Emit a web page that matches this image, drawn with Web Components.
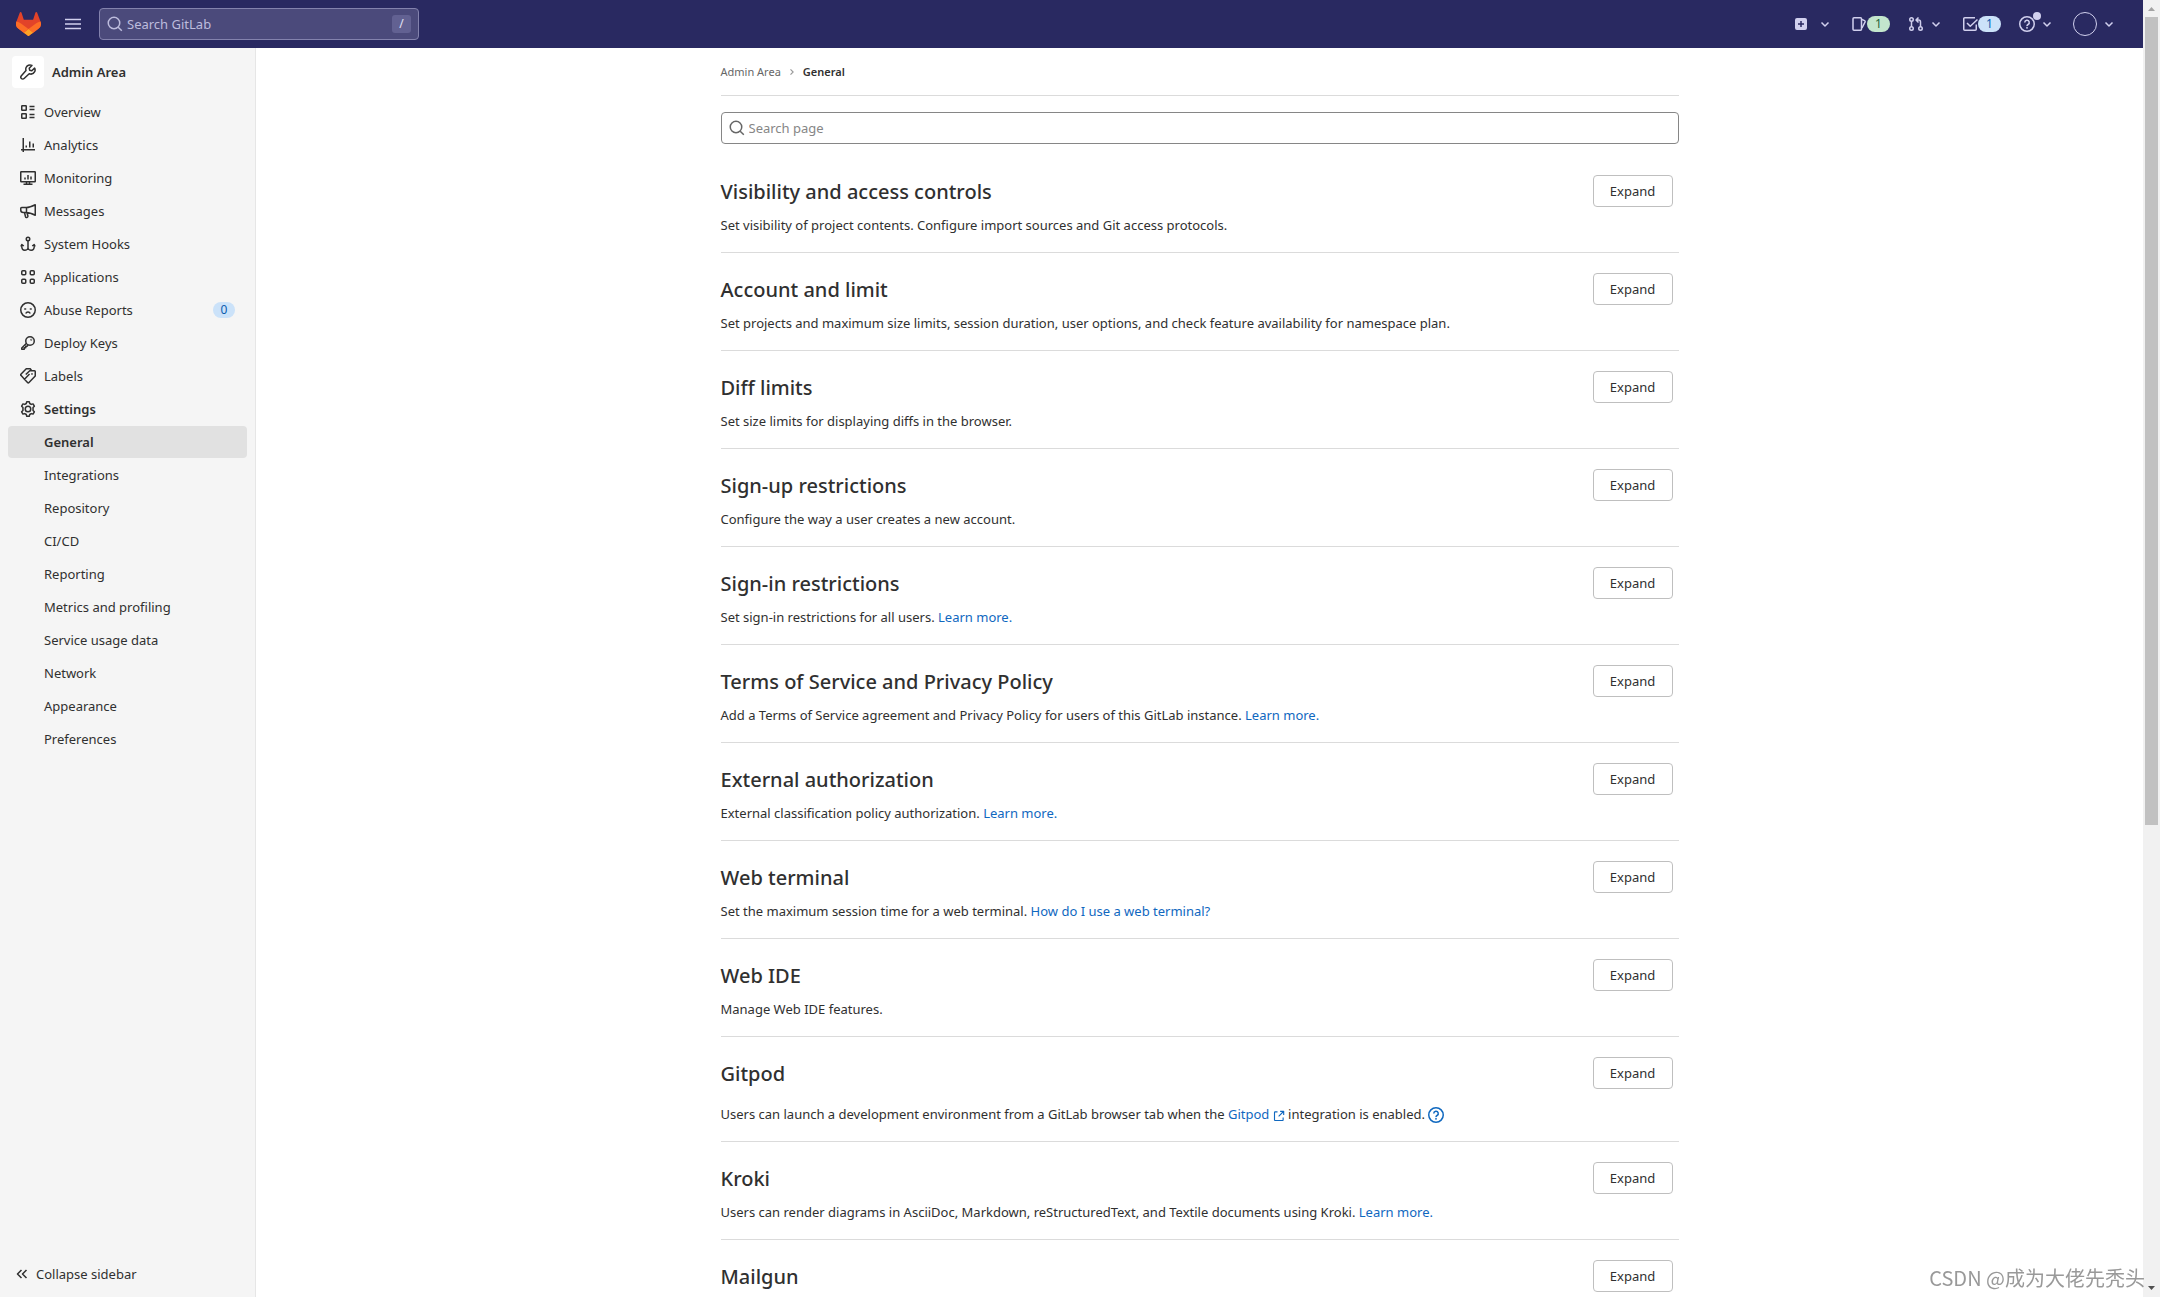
<!DOCTYPE html>
<html lang="en">
<head>
<meta charset="utf-8">
<title>General · Admin Area · GitLab</title>
<style>
  html, body { height: 100%; margin: 0; }
  body {
    overflow: hidden;
    font: 13px/20px 'Noto Sans', 'Noto Sans CJK SC', sans-serif;
    color: #303030;
    background: #fff;
  }
  a { color: #1068bf; text-decoration: none; }
  a.help gl-icon { vertical-align: text-bottom; }
</style>
</head>
<body>
<admin-app>
  <nav-bar slot="nav"></nav-bar>
  <side-bar slot="side">
    <side-item icon="overview" label="Overview"></side-item>
    <side-item icon="chart" label="Analytics"></side-item>
    <side-item icon="monitor" label="Monitoring"></side-item>
    <side-item icon="messages" label="Messages"></side-item>
    <side-item icon="hook" label="System Hooks"></side-item>
    <side-item icon="applications" label="Applications"></side-item>
    <side-item icon="abuse" label="Abuse Reports" badge="0"></side-item>
    <side-item icon="key" label="Deploy Keys"></side-item>
    <side-item icon="labels" label="Labels"></side-item>
    <side-item icon="settings" label="Settings" bold></side-item>
    <side-item label="General" bold active></side-item>
    <side-item label="Integrations"></side-item>
    <side-item label="Repository"></side-item>
    <side-item label="CI/CD"></side-item>
    <side-item label="Reporting"></side-item>
    <side-item label="Metrics and profiling"></side-item>
    <side-item label="Service usage data"></side-item>
    <side-item label="Network"></side-item>
    <side-item label="Appearance"></side-item>
    <side-item label="Preferences"></side-item>
  </side-bar>
  <settings-page>
    <settings-section heading="Visibility and access controls">Set visibility of project contents. Configure import sources and Git access protocols.</settings-section>
    <settings-section heading="Account and limit">Set projects and maximum size limits, session duration, user options, and check feature availability for namespace plan.</settings-section>
    <settings-section heading="Diff limits">Set size limits for displaying diffs in the browser.</settings-section>
    <settings-section heading="Sign-up restrictions">Configure the way a user creates a new account.</settings-section>
    <settings-section heading="Sign-in restrictions">Set sign-in restrictions for all users. <a href="#">Learn more.</a></settings-section>
    <settings-section heading="Terms of Service and Privacy Policy">Add a Terms of Service agreement and Privacy Policy for users of this GitLab instance. <a href="#">Learn more.</a></settings-section>
    <settings-section heading="External authorization">External classification policy authorization. <a href="#">Learn more.</a></settings-section>
    <settings-section heading="Web terminal">Set the maximum session time for a web terminal. <a href="#">How do I use a web terminal?</a></settings-section>
    <settings-section heading="Web IDE">Manage Web IDE features.</settings-section>
    <settings-section heading="Gitpod" roomy>Users can launch a development environment from a GitLab browser tab when the <a href="#">Gitpod <gl-icon name="external" size="12"></gl-icon></a> integration is enabled. <a class="help" href="#" aria-label="Help"><gl-icon name="question"></gl-icon></a></settings-section>
    <settings-section heading="Kroki">Users can render diagrams in AsciiDoc, Markdown, reStructuredText, and Textile documents using Kroki. <a href="#">Learn more.</a></settings-section>
    <settings-section heading="Mailgun"></settings-section>
  </settings-page>
  <scroll-track slot="scroll"></scroll-track>
</admin-app>
<water-mark>CSDN @成为大佬先秃头</water-mark>

<script>
const ICONS = {
  overview: '<rect x="1.75" y="1.75" width="4.5" height="4.5" rx=".5"/><rect x="1.75" y="9.75" width="4.5" height="4.5" rx=".5"/><path d="M9.5 2.5h5M9.5 5.5h5M9.5 10.5h5M9.5 13.5h5"/>',
  chart: '<path d="M3.25 1v14M1 12.75h14M6.25 10.5v-2M9.75 10.5v-6M13.25 10.5v-4"/>',
  monitor: '<rect x=".75" y="1.75" width="14.5" height="10" rx=".5"/><path d="M6.5 12v2M9.5 12v2M3.5 14.25h9M5 9.5v-2M8 9.5V5M11 9.5v-3"/>',
  messages: '<path d="M.75 5.5a1 1 0 0 1 1-1H6.5c2.5 0 5.500-1.100 8.750-2.750v10.5C12 10.600 9 9.500 6.500 9.500H3.250a2.500 2.500 0 0 1-2.500-2.500zM6.500 4.500v5M4.500 9.500l1 4.250a1 1 0 0 0 1.200.7l.6-.2a1 1 0 0 0 .6-1.200L7 9.750"/>',
  hook: '<circle cx="8" cy="3" r="1.75"/><path d="M8 5v9M1.75 8.75v1.5C1.75 12.5 3 14.25 4.75 14.25S8 13 8 12c0 1 1.5 2.250 3.250 2.250s3-1.750 3-4v-1.500M.9 10.500l.9-2 2 1.500M15.100 10.500l-.9-2-2 1.500"/>',
  applications: '<rect x="1.75" y="1.75" width="4" height="4" rx="1"/><rect x="10.25" y="1.75" width="4" height="4" rx="1"/><rect x="1.75" y="10.25" width="4" height="4" rx="1"/><rect x="10.25" y="10.25" width="4" height="4" rx="1"/>',
  abuse: '<circle cx="8" cy="8" r="7.25"/><path d="M5.75 11.5c.4-.9 1.2-1.4 2.250-1.400s1.850.5 2.250 1.400"/><circle cx="5.250" cy="7" r=".35"/><circle cx="10.750" cy="7" r=".35"/>',
  key: '<circle cx="10" cy="6" r="4.25"/><path d="M6.25 8.5L1.75 13v1.25h2.5v-1.5h1.5v-1.5H7l1.25-1.350"/><circle cx="11.250" cy="4.750" r=".25"/>',
  labels: '<path d="M5.75 6.5l4-3.750h4.750a.75.75 0 0 1 .75.75V8l-6.500 6.750a.7.7 0 0 1-1 0L3.750 10.500M11.500 2.500L10.250.8h-4L.9 6.250a.8.8 0 0 0 0 1.100l3.600 3.800L9.500 6"/><circle cx="12" cy="6" r=".25"/>',
  settings: '<path d="M6.75.75h2.500l.5 1.750 1.500.9 1.800-.5 1.300 2.300-1.300 1.400v2.800l1.300 1.400-1.300 2.300-1.800-.5-1.500.9-.5 1.750h-2.500l-.5-1.750-1.500-.9-1.800.5-1.300-2.300 1.300-1.400V6.600l-1.300-1.400 1.300-2.300 1.800.5 1.500-.9z"/><circle cx="8" cy="8" r="2.75"/>',
  wrench: '<path d="M14.600 4.100l-2.800 2.700-2.100-.5-.5-2.100 2.700-2.800C9.500.3 7 1.400 6.100 3.500c-.5 1.100-.4 2.100-.1 3.100l-4.600 5.200c-.8.9-.8 1.900 0 2.700s1.900.8 2.700 0l5.100-4.700c2.200.7 4.500-.2 5.500-2.200.6-1.200.5-2.400-.1-3.500z"/>',
  search: '<circle cx="7" cy="7" r="5.75"/><path d="M11.200 11.200l3.600 3.600"/>',
  hamburger: '<path d="M0 3.500h16M0 8h16M0 12.500h16"/>',
  plus: '<path fill="currentColor" stroke="none" fill-rule="evenodd" d="M4 2h8a2 2 0 0 1 2 2v8a2 2 0 0 1-2 2H4a2 2 0 0 1-2-2V4a2 2 0 0 1 2-2zm3.250 3v2.250H5v1.500h2.250V11h1.500V8.750H11v-1.500H8.750V5z"/>',
  chevron: '<path d="M4.500 6.500L8 10l3.500-3.500"/>',
  right: '<path d="M6 4.500L9.500 8 6 11.500"/>',
  collapse: '<path d="M7.500 4L3.500 8l4 4M12.500 4l-4 4 4 4"/>',
  issues: '<rect x="2" y="1.75" width="8.5" height="12.5" rx="1"/><path d="M11 3.500l2.600 1.100a1 1 0 0 1 .5 1.300L11 12"/>',
  merge: '<circle cx="3.500" cy="3.500" r="1.75"/><circle cx="3.500" cy="12.500" r="1.75"/><circle cx="12.500" cy="12.500" r="1.75"/><path d="M3.500 5.250v5.500M12.500 10.750V6a2 2 0 0 0-2-2h-2M10.500 1.500L8 4l2.500 2.500"/>',
  todo: '<path d="M14.250 8.500v4.750a1 1 0 0 1-1 1H2.750a1 1 0 0 1-1-1V2.750a1 1 0 0 1 1-1H13M5 7l3.250 3.250L15.500 3.500"/>',
  question: '<circle cx="8" cy="8" r="7.25"/><path d="M5.750 6.500a2.250 2.250 0 1 1 3.300 2C8.300 8.900 8 9.200 8 10"/><circle cx="8" cy="11.800" r=".3"/>',
  external: '<path d="M6 2.500H2.750a.75.75 0 0 0-.75.75v10c0 .4.3.75.75.75h10a.75.75 0 0 0 .75-.75V10M9.500 1.750h4.750V6.500M14 2L7.500 8.500"/>'
};

class GlIcon extends HTMLElement {
  connectedCallback() {
    const size = this.getAttribute('size') || '16';
    this.attachShadow({ mode: 'open' }).innerHTML = `
      <style>
        :host { display: inline-block; flex: none; vertical-align: middle; }
        svg { display: block; fill: none; stroke: currentColor; stroke-width: 1.5; stroke-linejoin: round; }
      </style>
      <svg width="${size}" height="${size}" viewBox="0 0 16 16" aria-hidden="true">${ICONS[this.getAttribute('name')]}</svg>
    `;
  }
}

class AdminApp extends HTMLElement {
  constructor() {
    super();
    this.attachShadow({ mode: 'open' }).innerHTML = `
      <style>
        :host { display: flex; height: 100vh; overflow: hidden; }
        .app { flex: 1; min-width: 0; display: flex; flex-direction: column; }
        .body { flex: 1; min-height: 0; display: flex; }
        main { flex: 1; min-width: 0; overflow: hidden; }
      </style>
      <div class="app">
        <slot name="nav"></slot>
        <div class="body">
          <slot name="side"></slot>
          <main><slot></slot></main>
        </div>
      </div>
      <slot name="scroll"></slot>
    `;
  }
}

class NavBar extends HTMLElement {
  constructor() {
    super();
    this.attachShadow({ mode: 'open' }).innerHTML = `
      <style>
        :host {
          display: flex;
          align-items: center;
          justify-content: space-between;
          flex: none;
          height: 48px;
          padding: 0 26px 0 16px;
          box-sizing: border-box;
          background: #292961;
          color: #d1d0ee;
        }
        .left, .right, .search, button { display: flex; align-items: center; }
        .right { gap: 18px; }
        button { padding: 0; border: 0; background: none; color: inherit; font: inherit; }
        .right button { gap: 4px; }
        .right .new { gap: 8px; }
        .right .count { gap: 0; }
        .logo { display: block; height: 24px; margin-right: 24px; }
        .search {
          box-sizing: border-box;
          width: 320px;
          height: 32px;
          margin-left: 18px;
          padding: 0 7px;
          gap: 4px;
          border: 1px solid #8382ad;
          border-radius: 4px;
          background: #4b4a7b;
          color: #bdbcdd;
        }
        input { flex: 1; min-width: 0; padding: 0; border: 0; outline: 0; background: none; color: inherit; font: inherit; }
        input::placeholder { color: #bdbcdd; opacity: 1; }
        kbd {
          width: 19px;
          border-radius: 3px;
          background: #626192;
          color: #e4e3f5;
          font: 12px/18px 'Noto Sans', sans-serif;
          text-align: center;
        }
        .badge {
          width: 23px;
          border-radius: 8px;
          font-size: 12px;
          line-height: 16px;
          text-align: center;
        }
        .green { background: #c3e6cd; color: #24663b; }
        .blue { background: #cbe2f9; color: #0b5cad; }
        .help { position: relative; }
        .dot { position: absolute; left: 14px; top: -4px; width: 8px; height: 8px; border-radius: 50%; background: #d1d0ee; }
        .avatar { box-sizing: border-box; width: 24px; height: 24px; border: 1px solid #d1d0ee; border-radius: 50%; }
      </style>
      <div class="left">
        <a class="logo" href="#" aria-label="Homepage">
          <svg width="25" height="24" viewBox="0 0 25 24">
            <path d="m24.507 9.500-.034-.09L21.082.562a.896.896 0 0 0-1.694.091l-2.290 7.010H7.825L5.535.653a.898.898 0 0 0-1.694-.09L.451 9.411.416 9.500a6.297 6.297 0 0 0 2.090 7.278l.012.010.030.022 5.160 3.867 2.560 1.935 1.554 1.176a1.051 1.051 0 0 0 1.268 0l1.555-1.176 2.560-1.935 5.197-3.890.014-.010A6.297 6.297 0 0 0 24.507 9.500Z" fill="#E24329"/>
            <path d="m24.507 9.500-.034-.09a11.440 11.440 0 0 0-4.560 2.051l-7.447 5.632 4.742 3.584 5.197-3.890.014-.010A6.297 6.297 0 0 0 24.507 9.500Z" fill="#FC6D26"/>
            <path d="m7.707 20.677 2.560 1.935 1.555 1.176a1.051 1.051 0 0 0 1.268 0l1.555-1.176 2.560-1.935-4.743-3.584-4.755 3.584Z" fill="#FCA326"/>
            <path d="M5.010 11.461a11.430 11.430 0 0 0-4.560-2.050L.416 9.500a6.297 6.297 0 0 0 2.090 7.278l.012.010.030.022 5.160 3.867 4.745-3.584-7.444-5.632Z" fill="#FC6D26"/>
          </svg>
        </a>
        <button aria-label="Menu"><gl-icon name="hamburger"></gl-icon></button>
        <div class="search">
          <gl-icon name="search"></gl-icon>
          <input type="text" placeholder="Search GitLab" aria-label="Search GitLab">
          <kbd>/</kbd>
        </div>
      </div>
      <div class="right">
        <button class="new" aria-label="Create new"><gl-icon name="plus"></gl-icon><gl-icon name="chevron"></gl-icon></button>
        <button class="count" aria-label="Issues"><gl-icon name="issues"></gl-icon><span class="badge green">1</span></button>
        <button aria-label="Merge requests"><gl-icon name="merge"></gl-icon><gl-icon name="chevron"></gl-icon></button>
        <button class="count" aria-label="To-Do List"><gl-icon name="todo"></gl-icon><span class="badge blue">1</span></button>
        <button class="help" aria-label="Help"><gl-icon name="question"></gl-icon><span class="dot"></span><gl-icon name="chevron"></gl-icon></button>
        <button aria-label="Profile"><span class="avatar"></span><gl-icon name="chevron"></gl-icon></button>
      </div>
    `;
  }
}

class SideBar extends HTMLElement {
  constructor() {
    super();
    this.attachShadow({ mode: 'open' }).innerHTML = `
      <style>
        :host {
          display: flex;
          flex-direction: column;
          flex: none;
          box-sizing: border-box;
          width: 256px;
          padding: 8px 8px 7px;
          border-right: 1px solid #e6e6e6;
          background: #f5f5f5;
        }
        .context {
          display: flex;
          align-items: center;
          gap: 8px;
          margin: 0 4px 8px;
          color: #303030;
          font-weight: 600;
          text-decoration: none;
        }
        .tile { display: grid; place-items: center; width: 32px; height: 32px; border-radius: 4px; background: #fff; }
        nav { flex: 1; display: flex; flex-direction: column; gap: 1px; }
        button {
          display: flex;
          align-items: center;
          gap: 6px;
          height: 32px;
          padding: 0 6px;
          border: 0;
          background: none;
          color: #303030;
          font: inherit;
        }
      </style>
      <a class="context" href="#"><span class="tile"><gl-icon name="wrench"></gl-icon></span>Admin Area</a>
      <nav><slot></slot></nav>
      <button><gl-icon name="collapse"></gl-icon>Collapse sidebar</button>
    `;
  }
}

class SideItem extends HTMLElement {
  connectedCallback() {
    const icon = this.getAttribute('icon');
    const badge = this.getAttribute('badge');
    this.attachShadow({ mode: 'open' }).innerHTML = `
      <style>
        :host { display: block; }
        a {
          display: flex;
          align-items: center;
          gap: 8px;
          height: 32px;
          padding: 0 12px;
          border-radius: 4px;
          color: #303030;
          text-decoration: none;
        }
        :host([bold]) a { font-weight: 600; }
        :host([active]) a { background: #e1e1e1; }
        .icon { width: 16px; height: 16px; display: flex; }
        .label { flex: 1; }
        .badge {
          width: 22px;
          border-radius: 8px;
          background: #cbe2f9;
          color: #0b5cad;
          font-size: 12px;
          line-height: 16px;
          text-align: center;
        }
      </style>
      <a href="#">
        <span class="icon">${icon ? `<gl-icon name="${icon}"></gl-icon>` : ''}</span>
        <span class="label">${this.getAttribute('label')}</span>
        ${badge ? `<span class="badge">${badge}</span>` : ''}
      </a>
    `;
  }
}

class SettingsPage extends HTMLElement {
  constructor() {
    super();
    this.attachShadow({ mode: 'open' }).innerHTML = `
      <style>
        :host { display: block; max-width: 958px; margin: 0 auto; padding: 0 16px; }
        nav {
          display: flex;
          align-items: center;
          gap: 5px;
          height: 47px;
          border-bottom: 1px solid #dbdbdb;
          font-size: 11px;
        }
        nav a { color: #666; text-decoration: none; }
        nav gl-icon { color: #999; }
        nav .current { color: #303030; font-weight: 600; }
        .search {
          display: flex;
          align-items: center;
          gap: 4px;
          box-sizing: border-box;
          height: 32px;
          margin: 16px 0 11px;
          padding: 0 7px;
          border: 1px solid #868686;
          border-radius: 4px;
          color: #666;
        }
        input { flex: 1; min-width: 0; padding: 0; border: 0; outline: 0; background: none; font: inherit; }
        input::placeholder { color: #868686; opacity: 1; }
      </style>
      <nav aria-label="Breadcrumb">
        <a href="#">Admin Area</a>
        <gl-icon name="right" size="12"></gl-icon>
        <a class="current" href="#">General</a>
      </nav>
      <div class="search">
        <gl-icon name="search"></gl-icon>
        <input type="text" placeholder="Search page" aria-label="Search page">
      </div>
      <slot></slot>
    `;
  }
}

class SettingsSection extends HTMLElement {
  connectedCallback() {
    this.attachShadow({ mode: 'open' }).innerHTML = `
      <style>
        :host {
          display: flex;
          align-items: flex-start;
          justify-content: space-between;
          padding: 20px 6px 17px 0;
          border-bottom: 1px solid #dbdbdb;
        }
        h2 { margin: 0; font-size: 20px; font-weight: 500; line-height: 34px; }
        p { min-height: 20px; margin: 6px 0 0; }
        :host([roomy]) p { margin-top: 13px; }
        button {
          box-sizing: border-box;
          width: 80px;
          height: 32px;
          padding: 0;
          border: 1px solid #bfbfbf;
          border-radius: 4px;
          background: #fff;
          color: #303030;
          font: inherit;
        }
      </style>
      <div>
        <h2>${this.getAttribute('heading')}</h2>
        <p><slot></slot></p>
      </div>
      <button>Expand</button>
    `;
  }
}

class ScrollTrack extends HTMLElement {
  constructor() {
    super();
    this.attachShadow({ mode: 'open' }).innerHTML = `
      <style>
        :host {
          display: flex;
          flex-direction: column;
          align-items: center;
          flex: none;
          width: 17px;
          background: #f1f1f1;
        }
        svg { display: block; flex: none; }
        .rail { flex: 1; width: 13px; }
        .thumb { height: 64%; background: #c1c1c1; }
      </style>
      <svg width="17" height="17"><path d="M5 11l3.500-4 3.500 4z" fill="#a3a3a3"/></svg>
      <div class="rail"><div class="thumb"></div></div>
      <svg width="17" height="17"><path d="M5 6l3.500 4L12 6z" fill="#505050"/></svg>
    `;
  }
}

class WaterMark extends HTMLElement {
  constructor() {
    super();
    this.attachShadow({ mode: 'open' }).innerHTML = `
      <style>
        :host {
          position: fixed;
          right: 15px;
          bottom: 4px;
          color: #999;
          font: 20px/30px 'Noto Sans CJK SC', sans-serif;
          white-space: nowrap;
        }
      </style>
      <slot></slot>
    `;
  }
}

customElements.define('gl-icon', GlIcon);
customElements.define('admin-app', AdminApp);
customElements.define('nav-bar', NavBar);
customElements.define('side-bar', SideBar);
customElements.define('side-item', SideItem);
customElements.define('settings-page', SettingsPage);
customElements.define('settings-section', SettingsSection);
customElements.define('scroll-track', ScrollTrack);
customElements.define('water-mark', WaterMark);
</script>
</body>
</html>
